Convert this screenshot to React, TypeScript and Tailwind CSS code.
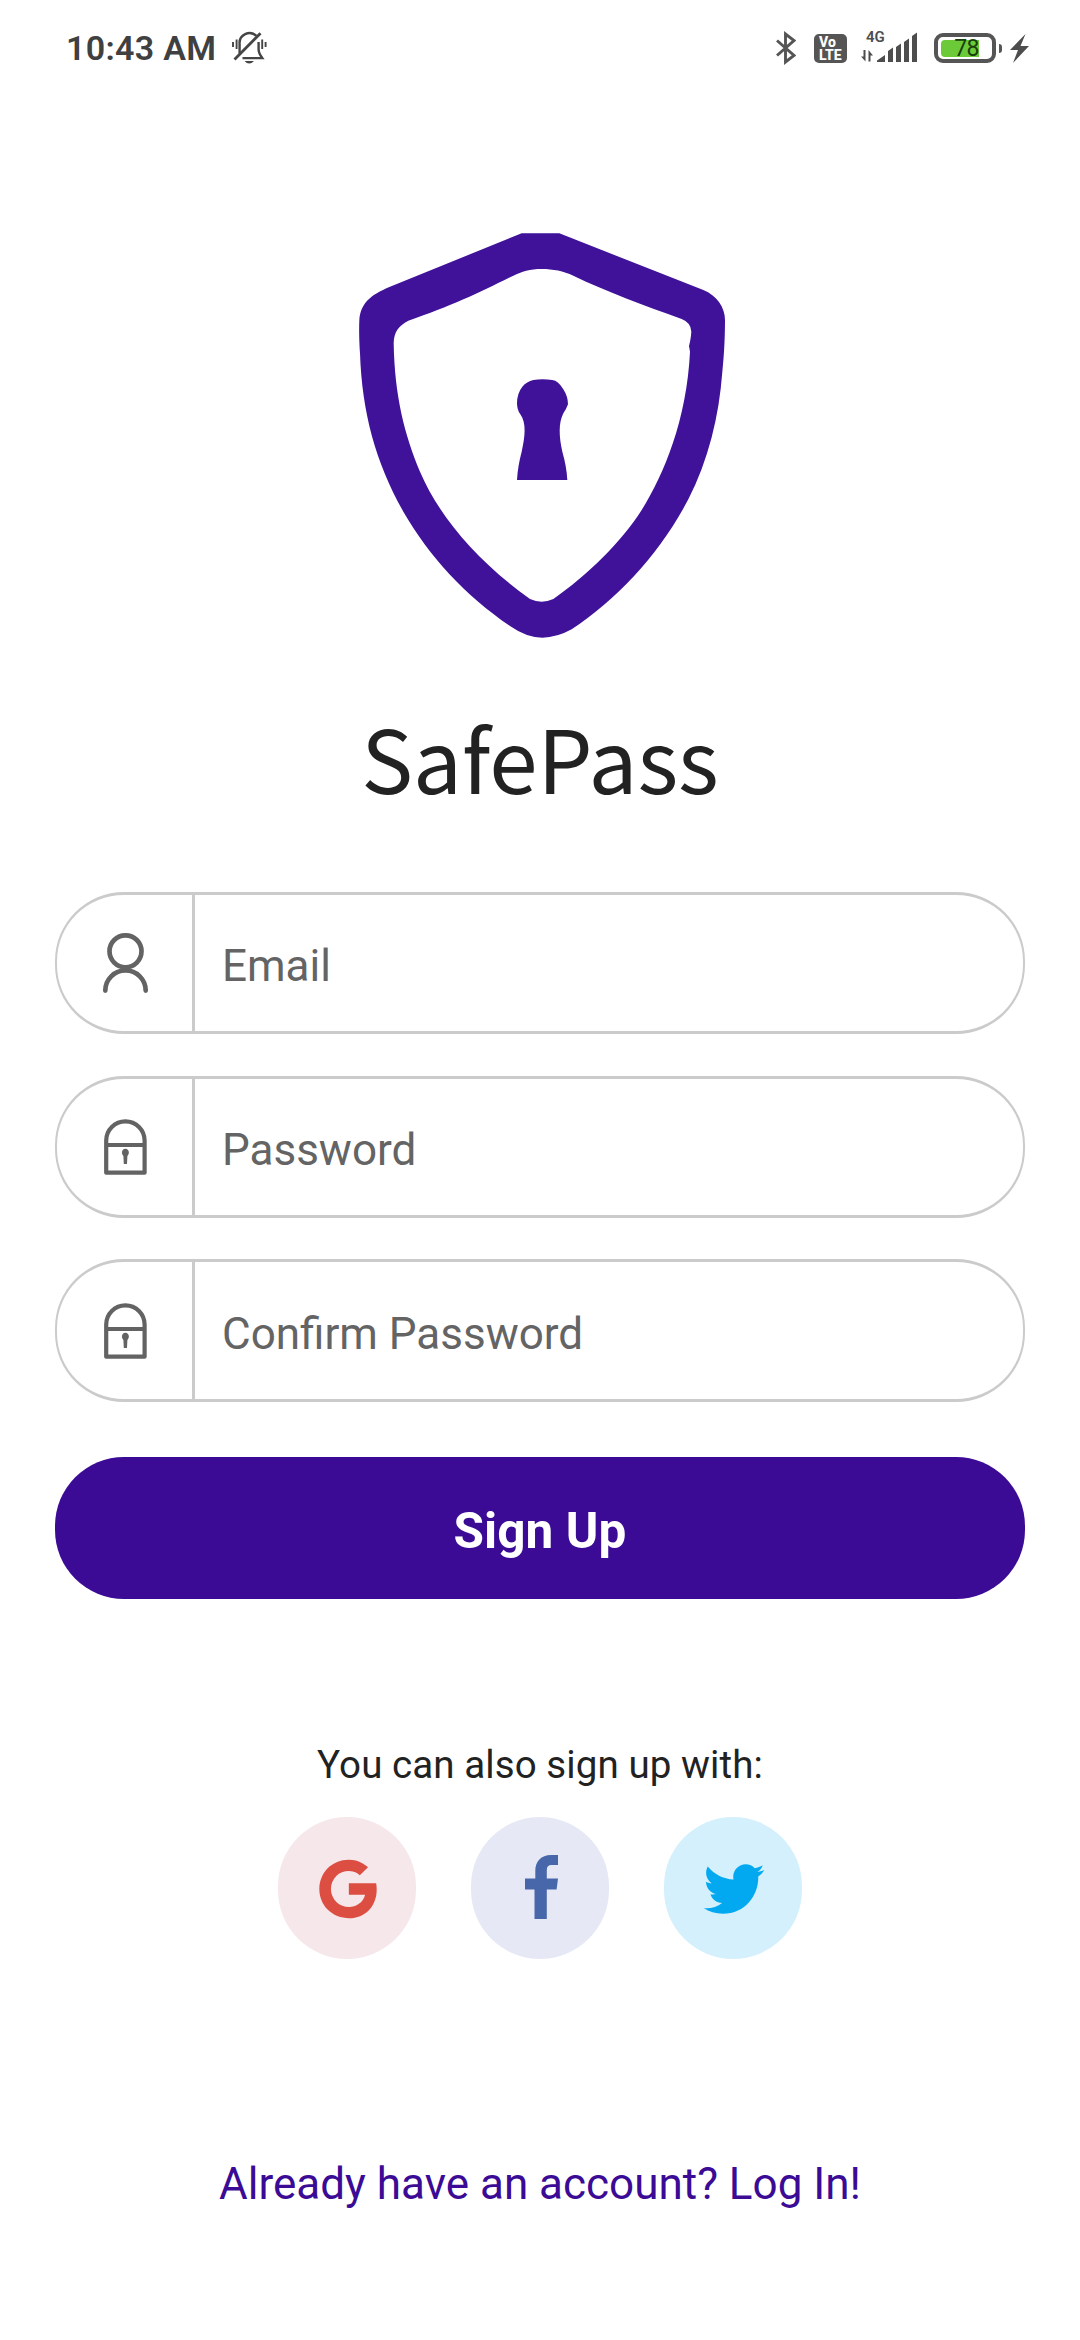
import React from "react";
import { IoLogoGoogle, IoLogoTwitter } from "react-icons/io";

function BellOff() {
  return (
    <svg className="ml-[16px] mt-[31px] h-[34px] w-[35px]" viewBox="0 0 35 34" fill="none" stroke="#454545" strokeWidth="2.4">
      <path d="M7.6 22.5V13a10 10 0 0 1 16.8-8.200M26.600 11v7.500c0 3.500 1.500 5.500 3.700 8.600H10.500" />
      <path d="M2.500 28.500L28.500 2.200" strokeWidth="2.800" />
      <path d="M1 11v5M4.600 8.500v9.500M30.200 8.500v9.500M33.600 11v5" strokeWidth="1.900" />
      <path d="M12.500 30h9.500q-4.700 5-9.500 0z" fill="#454545" stroke="none" />
    </svg>
  );
}

function Bluetooth() {
  return (
    <svg className="mt-[31px] h-[34px] w-[20px]" viewBox="0 0 20 34" fill="none" stroke="#555" strokeWidth="2.900">
      <path d="M1 9.500L18 24.500L9.500 31V3L18 9.500L1 24.500" />
    </svg>
  );
}

function Signal() {
  return (
    <div className="ml-[14px] mt-[31px] flex h-8 w-[56px] flex-col">
      <span className="ml-[5px] h-[13px] text-[15px] font-semibold leading-[13px] text-[#4d4d4d]">4G</span>
      <svg className="-mt-[13px] h-[31px] w-[56px]" viewBox="0 0 56 31" fill="#4d4d4d">
        <path d="M2.500 19h2v11.500L0 25.500h2.500zM7.500 30.500V19l4.500 5.500H9.500v6zM16 31v-1.500L24 24v7zM27 31V20l5-3.500V31zM35 31V16l5-3.500V31zM43 31V11l5-3.500V31zM51 31V5l5-3.500V31z" />
      </svg>
    </div>
  );
}

function Battery() {
  return (
    <div className="ml-[17px] mt-[33px] flex h-[30px] items-center">
      <div className="flex h-[30px] w-[62px] items-center rounded-[9px] border-4 border-[#555] pl-[3px]">
        <div className="flex h-[17px] w-[38px] items-center justify-end rounded-l-[4px] bg-[#6cca38]">
          <span className="text-[23px] leading-[17px] tracking-[-0.5px] text-[#17400c]">78</span>
        </div>
      </div>
      <div className="ml-[3px] h-[9px] w-[3px] rounded-r-sm bg-[#555]" />
      <svg className="ml-2 h-[29px] w-[19px]" viewBox="0 0 19 29" fill="#4d4d4d">
        <path d="M15.500 0L0 16h8L3 29l16-17h-8.500z" />
      </svg>
    </div>
  );
}

function StatusBar() {
  return (
    <header className="flex h-[100px] shrink-0 items-start justify-between pl-[66px] pr-[51px]">
      <div className="flex items-start">
        <span className="mt-[28px] text-[34px] font-semibold leading-[40px] tracking-[0.300px] text-[#404040]">10:43 AM</span>
        <BellOff />
      </div>
      <div className="flex items-start">
        <Bluetooth />
        <div className="ml-[18px] mt-[34px] flex h-[29px] w-[33px] flex-col justify-center rounded-[5px] bg-[#555] text-[14px] font-extrabold leading-[12.500px] text-white">
          <span className="pl-[5px]">Vo</span>
          <span className="pl-[5px]">LTE</span>
        </div>
        <Signal />
        <Battery />
      </div>
    </header>
  );
}

function Shield() {
  return (
    <svg className="mt-[120px] h-[430px] w-[400px] shrink-0" viewBox="0 0 1200 1290" fill="#40129a">
      <path
        fillRule="evenodd"
        d="M545 40H658L1090 210C1130 226 1155 262 1155 300C1155 345 1153 400 1147 455C1137 590 1105 720 1045 838C960 1000 835 1135 695 1228Q650 1253 607 1253Q560 1253 510 1218C375 1125 268 1010 190 875C108 730 66 580 60 400C57 350 57 325 58 300C62 250 90 225 150 200ZM605 147C570 147 545 155 520 167C420 217 335 258 205 302C175 318 162 335 161 370C164 530 194 645 240 755C296 885 404 1018 570 1137Q605 1153 640 1137C740 1068 845 965 905 870C972 762 1040 600 1050 395L1047 378L1050 365Q1053 350 1054 335Q1053 308 1025 297C910 255 800 215 700 167C670 153 640 147 605 147Z"
      />
      <path d="M580 480Q607 475 637 480Q655 482 670 508Q684 530 684 553Q680 565 670 580C655 610 657 650 667 695Q680 740 682 780H531Q533 740 545 695C555 650 560 610 541 583Q531 570 531 550Q531 520 547 500Q560 485 580 480Z" />
    </svg>
  );
}

function PersonIcon() {
  return (
    <svg className="h-[62px] w-[48px]" viewBox="0 0 48 62" fill="none" stroke="#636363" strokeWidth="4.700" strokeLinecap="round">
      <circle cx="24.500" cy="19.300" r="16" />
      <path d="M4.300 58.600a20.200 20.200 0 0 1 40.400 0" />
    </svg>
  );
}

function LockIcon() {
  return (
    <svg className="h-[62px] w-[48px]" viewBox="0 0 48 62" fill="none" stroke="#636363" strokeWidth="4.200" strokeLinejoin="round">
      <path d="M5.200 56.700V24.500a19.200 19.200 0 0 1 38.400 0V56.700zM5.200 29h38.400" />
      <path d="M21 37.200a3.500 3.500 0 1 1 6.800 0q-.4 1.800-1.400 2.800l-.4 8h-3.200l-.4-8q-1.200-1-1.400-2.800z" fill="#636363" stroke="none" />
    </svg>
  );
}

function Field({ label, type, icon }: { label: string; type: string; icon: React.ReactNode }) {
  return (
    <div className="flex h-[142px] w-full shrink-0 overflow-hidden rounded-[69px] border-[2.500px] border-y-[3px] border-[#cbcbcb] last:h-[143px]">
      <div className="flex w-[138px] shrink-0 items-center justify-center border-r-[3px] border-[#cbcbcb]">{icon}</div>
      <input
        type={type}
        placeholder={label}
        aria-label={label}
        className="min-w-0 flex-1 bg-transparent pl-[27px] pt-[6px] text-[44px] text-[#222] outline-none placeholder:text-[#646464]"
      />
    </div>
  );
}

function FacebookLogo() {
  return (
    <svg className="mb-[2px] ml-[3px] h-[64px] w-[33px]" viewBox="0 0 33 64" fill="currentColor">
      <path d="M33 0H26C16 0 10.300 6.500 10.300 16V23.500H0V34.500H9.500V64H21.800V34.500H31.600L33 23.500H21.800V15Q21.800 10 26.500 10H33Z" />
    </svg>
  );
}

function Social({ name, className, children }: { name: string; className: string; children: React.ReactNode }) {
  return (
    <button aria-label={name} className={`flex h-[142px] w-[138px] items-center justify-center rounded-[69px] ${className}`}>
      {children}
    </button>
  );
}

export default function App() {
  return (
    <div className="flex h-[2340px] w-[1080px] flex-col overflow-hidden bg-white font-['Roboto',sans-serif]">
      <StatusBar />
      <main className="flex flex-1 flex-col items-center px-[55px]">
        <Shield />
        <h1 className="mt-[41px] h-[130px] shrink-0 font-['Noto_Sans_CJK_SC','Roboto',sans-serif] text-[87px] leading-[130px] text-[#222]">
          SafePass
        </h1>
        <form className="mt-[71px] flex w-full flex-col" onSubmit={(e) => e.preventDefault()}>
          <div className="flex flex-col gap-[41.500px]">
            <Field label="Email" type="email" icon={<PersonIcon />} />
            <Field label="Password" type="password" icon={<LockIcon />} />
            <Field label="Confirm Password" type="password" icon={<LockIcon />} />
          </div>
          <button className="mt-[55px] h-[142px] rounded-[69px] bg-[#3b0b96] pt-[6px] text-[49.500px] font-bold tracking-[0.100px] text-white">
            Sign Up
          </button>
        </form>
        <p className="mt-[143px] text-[38.500px] leading-[46px] tracking-[0.080px] text-[#222]">You can also sign up with:</p>
        <div className="mt-[29px] flex gap-[55px]">
          <Social name="Google" className="bg-[#f5e7ea] text-[#dc4e41]">
            <IoLogoGoogle className="ml-[2px] mt-[2px]" size={72} />
          </Social>
          <Social name="Facebook" className="bg-[#e6e9f5] text-[#4867aa]">
            <FacebookLogo />
          </Social>
          <Social name="Twitter" className="bg-[#d4f0fc] text-[#03a9f0]">
            <IoLogoTwitter className="ml-px mt-[2px]" size={66} />
          </Social>
        </div>
        <a className="mt-[199px] text-[44px] leading-[52px] text-[#3b0b96]">Already have an account? Log In!</a>
      </main>
    </div>
  );
}
